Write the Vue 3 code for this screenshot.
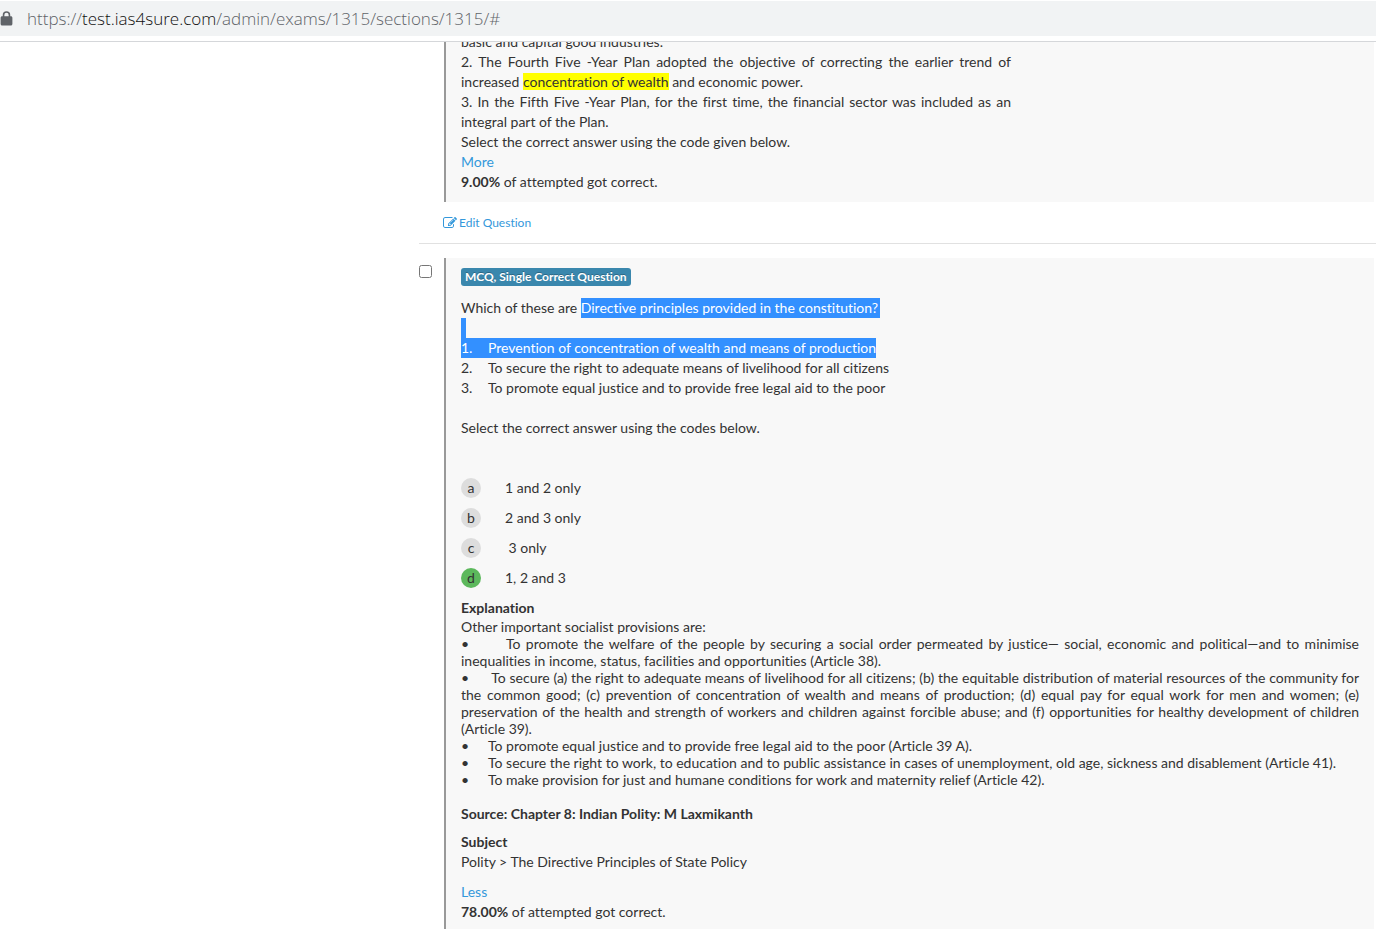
<script setup>
import { ref } from 'vue'

const gap = (n) => '\u00a0'.repeat(n)

const picked = ref(false)

const options = [
  { key: 'a', text: '1 and 2 only' },
  { key: 'b', text: '2 and 3 only' },
  { key: 'c', text: '\u00a03 only' },
  { key: 'd', text: '1, 2 and 3', correct: true },
]

const longProvisions = [
  { spaces: 7, text: 'To promote the welfare of the people by securing a social order permeated by justice— social, economic and political—and to minimise inequalities in income, status, facilities and opportunities (Article 38).' },
  { spaces: 6, text: 'To secure (a) the right to adequate means of livelihood for all citizens; (b) the equitable distribution of material resources of the community for the common good; (c) prevention of concentration of wealth and means of production; (d) equal pay for equal work for men and women; (e) preservation of the health and strength of workers and children against forcible abuse; and (f) opportunities for healthy development of children (Article 39).' },
]

const shortProvisions = [
  'To promote equal justice and to provide free legal aid to the poor (Article 39 A).',
  'To secure the right to work, to education and to public assistance in cases of unemployment, old age, sickness and disablement (Article 41).',
  'To make provision for just and humane conditions for work and maternity relief (Article 42).',
]
</script>

<template>
  <div class="window">
    <header class="address-bar">
      <svg class="lock" viewBox="0 0 12 14" aria-hidden="true">
        <path
          fill="#5f6368"
          fill-rule="evenodd"
          d="M2.500 5V3.700a3.500 3.500 0 0 1 7 0V5h.6c.8 0 1.400.6 1.400 1.400v5.700c0 .8-.6 1.400-1.400 1.400H1.900c-.8 0-1.400-.6-1.400-1.400V6.400C.5 5.600 1.100 5 1.900 5zM4 5h4V3.700a2 2 0 0 0-4 0z"
        />
      </svg>
      <span class="url">https://<span class="host">test.ias4sure.com</span>/admin/exams/1315/sections/1315/#</span>
    </header>

    <main class="page">
      <section class="entry">
        <article class="panel first">
          <div class="statement">
            <p>basic and capital good industries.</p>
            <p>2. The Fourth Five -Year Plan adopted the objective of correcting the earlier trend of increased <mark>concentration of wealth</mark> and economic power.</p>
            <p>3. In the Fifth Five -Year Plan, for the first time, the financial sector was included as an integral part of the Plan.</p>
            <p>Select the correct answer using the code given below.</p>
          </div>
          <a href="#">More</a>
          <p><b>9.00%</b> of attempted got correct.</p>
        </article>
        <a class="edit" href="#">
          <svg viewBox="0 0 1792 1792" aria-hidden="true">
            <path
              fill="currentColor"
              d="M888 1184l116-116-152-152-116 116v56h96v96h56zm440-720q-16-16-33 1l-350 350q-17 17-1 33t33-1l350-350q17-17 1-33zm80 594v190q0 119-84.500 203.500t-203.500 84.500h-832q-119 0-203.500-84.500t-84.500-203.500v-832q0-119 84.500-203.500t203.500-84.500h832q63 0 117 25 15 7 18 23 3 17-9 29l-49 49q-14 14-32 8-23-6-45-6h-832q-66 0-113 47t-47 113v832q0 66 47 113t113 47h832q66 0 113-47t47-113v-126q0-13 9-22l64-64q15-15 35-7t20 29zm-96-738l288 288-672 672h-288v-288zm444 132l-92 92-288-288 92-92q28-28 68-28t68 28l152 152q28 28 28 68t-28 68z"
            />
          </svg>
          Edit Question
        </a>
      </section>

      <section class="entry divided">
        <input v-model="picked" class="pick" type="checkbox" aria-label="Select question" />
        <article class="panel">
          <span class="badge">MCQ, Single Correct Question</span>
          <div class="question">
            <p>Which of these are <span class="selected line-end">Directive principles provided in the constitution?</span></p>
            <p><span class="selected line-end"></span></p>
            <p><span class="selected"><span class="marker">1.</span>Prevention of concentration of wealth and means of production</span></p>
            <p><span class="marker">2.</span>To secure the right to adequate means of livelihood for all citizens</p>
            <p><span class="marker">3.</span>To promote equal justice and to provide free legal aid to the poor</p>
            <p></p>
            <p>Select the correct answer using the codes below.</p>
          </div>
          <ul class="options">
            <li v-for="o in options" :key="o.key">
              <span class="letter" :class="{ correct: o.correct }">{{ o.key }}</span>
              <span>{{ o.text }}</span>
            </li>
          </ul>
          <h2>Explanation</h2>
          <div class="explanation">
            <p>Other important socialist provisions are:</p>
            <p v-for="p in longProvisions" :key="p.text">•{{ gap(p.spaces) }}{{ p.text }}</p>
            <p v-for="p in shortProvisions" :key="p"><span class="marker">•</span>{{ p }}</p>
            <p class="source"><b>Source: Chapter 8: Indian Polity: M Laxmikanth</b></p>
          </div>
          <h2>Subject</h2>
          <p class="subject">Polity &gt; The Directive Principles of State Policy</p>
          <a href="#">Less</a>
          <p><b>78.00%</b> of attempted got correct.</p>
        </article>
      </section>
    </main>
  </div>
</template>

<style>
body {
  margin: 0;
  background: #fff;
}
</style>

<style scoped>
.window {
  display: flex;
  flex-direction: column;
  height: 100vh;
  overflow: hidden;
  color: #333;
  font: 14px/20px Lato, "Liberation Sans", sans-serif;
  font-variant-ligatures: none;
}

p,
h2 {
  margin: 0;
  min-height: 20px;
}

h2 {
  font-size: 14px;
  line-height: 20px;
}

a {
  color: #3498db;
  text-decoration: none;
}

.address-bar {
  flex: none;
  display: flex;
  align-items: center;
  gap: 14px;
  height: 35px;
  border-top: 1px solid #fff;
  border-bottom: 5px solid #fff;
  background: #f1f3f4;
  font: 300 17px/24px "Open Sans", "Noto Sans", sans-serif;
  color: #5f6368;
}

.lock {
  width: 13px;
  height: 15px;
}

.host {
  color: #111;
}

.page {
  flex: 1;
  min-height: 0;
  overflow: hidden;
  border-top: 1px solid #d5d7da;
  padding-left: 419px;
}

.entry {
  display: grid;
  grid-template-columns: 25px 1fr;
  align-items: start;
}

.divided {
  border-top: 1px solid #e1e1e1;
  padding-top: 14px;
}

.panel {
  grid-column: 2;
  margin-right: 2px;
  padding: 10px 15px;
  border-left: 2px solid #999;
  background: #f8f8f8;
}

.first {
  margin-top: -20px;
}

.statement {
  max-width: 550px;
  text-align: justify;
}

mark {
  background: #ff0;
  color: inherit;
}

.edit {
  grid-column: 2;
  display: flex;
  align-items: center;
  gap: 2px;
  margin: 11px 0 10px -1px;
  font-size: 12px;
}

.edit svg {
  width: 14px;
  height: 14px;
}

.pick {
  width: 13px;
  height: 13px;
  margin: 7px 0 0;
}

.badge {
  display: block;
  width: fit-content;
  padding: 2px 4px;
  border-radius: 3px;
  background: #3a87ad;
  color: #fff;
  font-size: 12px;
  font-weight: 700;
  line-height: 14px;
  text-shadow: 0 -1px 0 rgba(0, 0, 0, 0.25);
}

.question {
  margin: 12px 0 40px;
}

.marker {
  display: inline-block;
  width: 27px;
}

.selected {
  display: inline-block;
  min-height: 20px;
  vertical-align: top;
  background: #3390ff;
  color: #fff;
}

.line-end {
  padding-right: 2px;
}

.line-end:empty {
  padding-right: 5px;
}

.options {
  display: grid;
  gap: 10px;
  margin: 0 0 10px;
  padding: 0;
  list-style: none;
}

.options li {
  display: flex;
  gap: 24px;
}

.letter {
  width: 20px;
  height: 20px;
  border-radius: 50%;
  background: #ddd;
  text-align: center;
}

.correct {
  background: #5cb85c;
}

.explanation {
  margin-bottom: 10px;
  line-height: 17px;
  text-align: justify;
}

.explanation p {
  min-height: 17px;
}

.explanation .source {
  margin-top: 17px;
}

.subject {
  margin-bottom: 10px;
}
</style>
